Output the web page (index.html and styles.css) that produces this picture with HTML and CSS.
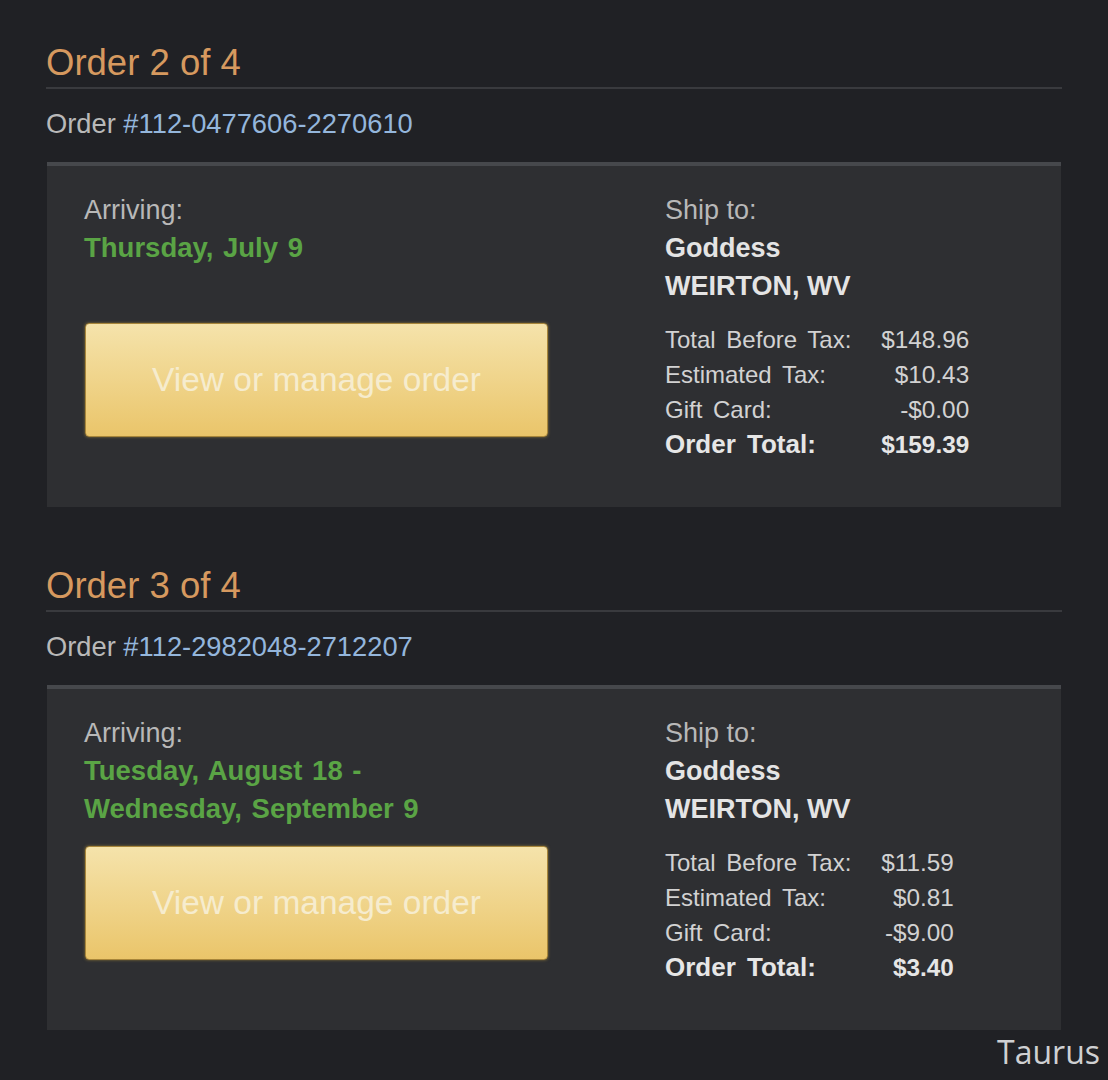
FILE: index.html
```html
<!DOCTYPE html>
<html lang="en">
<head>
    <meta charset="UTF-8">
    <meta name="viewport" content="width=device-width, initial-scale=1.0">
    <title>Your Orders</title>
    <link rel="stylesheet" href="styles.css">
</head>
<body>

    <div class="orders">

        <section class="order">
            <h2 class="order-title">Order 2 of 4</h2>
            <p class="order-number">Order <a href="#">#112-0477606-2270610</a></p>

            <div class="order-card">
                <div class="delivery">
                    <div class="label">Arriving:</div>
                    <div class="arrival-date">Thursday, July 9</div>
                    <button type="button" class="manage-btn">View or manage order</button>
                </div>

                <div class="shipping">
                    <div class="label">Ship to:</div>
                    <div class="ship-line">Goddess</div>
                    <div class="ship-line">WEIRTON, WV</div>

                    <table class="totals">
                        <tr><td>Total Before Tax:</td><td class="amount">$148.96</td></tr>
                        <tr><td>Estimated Tax:</td><td class="amount">$10.43</td></tr>
                        <tr><td>Gift Card:</td><td class="amount">-$0.00</td></tr>
                        <tr class="grand"><td>Order Total:</td><td class="amount">$159.39</td></tr>
                    </table>
                </div>
            </div>
        </section>

        <section class="order">
            <h2 class="order-title">Order 3 of 4</h2>
            <p class="order-number">Order <a href="#">#112-2982048-2712207</a></p>

            <div class="order-card">
                <div class="delivery">
                    <div class="label">Arriving:</div>
                    <div class="arrival-date">Tuesday, August 18 -<br>Wednesday, September 9</div>
                    <button type="button" class="manage-btn">View or manage order</button>
                </div>

                <div class="shipping">
                    <div class="label">Ship to:</div>
                    <div class="ship-line">Goddess</div>
                    <div class="ship-line">WEIRTON, WV</div>

                    <table class="totals">
                        <tr><td>Total Before Tax:</td><td class="amount">$11.59</td></tr>
                        <tr><td>Estimated Tax:</td><td class="amount">$0.81</td></tr>
                        <tr><td>Gift Card:</td><td class="amount">-$9.00</td></tr>
                        <tr class="grand"><td>Order Total:</td><td class="amount">$3.40</td></tr>
                    </table>
                </div>
            </div>
        </section>

    </div>

    <div class="watermark">Taurus</div>

</body>
</html>
```

FILE: styles.css
```css
body {
    margin: 0;
    background-color: #202125;
    font-family: "Liberation Sans", Arial, sans-serif;
    color: #bdbdbd;
    min-height: 1080px;
    position: relative;
}
.orders {
    padding: 0 46px;
}
.order {
    padding-top: 43px;
    margin-bottom: 16px;
}
.order-title {
    margin: 0;
    padding-bottom: 4px;
    font-size: 36.5px;
    line-height: 40px;
    font-weight: normal;
    color: #d6995f;
    border-bottom: 2px solid #393a3e;
}
.order-number {
    margin: 19px 0 0;
    font-size: 27.3px;
    line-height: 32px;
    color: #b9b9b9;
}
.order-number a {
    color: #94b6dc;
    text-decoration: none;
}
.order-card {
    display: flex;
    margin: 22px 1px 0;
    padding: 25px 37px 45px;
    background: #2e2f32;
    border-top: 4px solid #46484c;
}
.delivery {
    width: 581px;
    flex-shrink: 0;
}
.label {
    font-size: 27px;
    line-height: 38px;
    color: #b8b8b8;
}
.arrival-date {
    min-height: 76px;
    font-size: 27.5px;
    line-height: 38px;
    word-spacing: 2px;
    font-weight: bold;
    color: #5aa445;
}
.manage-btn {
    display: block;
    width: 463px;
    height: 114px;
    margin: 18px 0 0 1px;
    border: 1px solid #a8863a;
    border-radius: 4px;
    background: linear-gradient(to bottom, #f5e3ab, #eac56a);
    box-shadow: 0 0 3px rgba(200, 160, 60, 0.6);
    font-family: "Liberation Sans", Arial, sans-serif;
    font-size: 33.5px;
    color: #f6ecce;
    cursor: pointer;
}
.ship-line {
    font-size: 27px;
    line-height: 38px;
    font-weight: bold;
    color: #e4e4e4;
}
.totals {
    margin-top: 17px;
    border-collapse: collapse;
    font-size: 24px;
    line-height: 35px;
    word-spacing: 4px;
    color: #d2d2d2;
}
.totals td {
    padding: 0 30px 0 0;
}
.totals td.amount {
    padding: 0;
    text-align: right;
    font-size: 24.3px;
}
.totals .grand {
    font-weight: bold;
    font-size: 26px;
    color: #e6e6e6;
}
.watermark {
    position: absolute;
    right: 8px;
    top: 1032px;
    font-family: "Open Sans", sans-serif;
    font-size: 32px;
    line-height: 40px;
    color: #cfd0d2;
}
```
